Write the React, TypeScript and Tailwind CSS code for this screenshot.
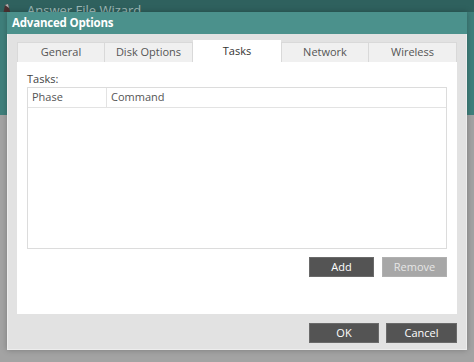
import React from "react";

const tabs = ["General", "Disk Options", "Tasks", "Network", "Wireless"];

function Tab({ label, active }: { label: string; active: boolean }) {
  if (active) {
    return (
      <div className="-mt-[2px] flex h-[22px] w-[88px] items-center justify-center bg-white text-[11px] text-[#333]">
        {label}
      </div>
    );
  }
  return (
    <div className="flex h-[20px] w-[88px] items-center justify-center border border-b-0 border-[#d9d9d9] bg-[#f0f0f0] text-[11px] text-[#555] [&+&]:border-l-0">
      {label}
    </div>
  );
}

function DarkButton({ children, muted }: { children: React.ReactNode; muted?: boolean }) {
  return (
    <button
      className={
        muted
          ? "flex h-[20px] w-[65px] items-center justify-center border border-[#b0b0b0] bg-[#a7a7a7] text-[11px] text-[#e6e6e6]"
          : "flex h-[20px] w-[65px] items-center justify-center border border-[#6a6a6a] bg-[#545454] text-[11px] text-white"
      }
    >
      {children}
    </button>
  );
}

export default function App() {
  return (
    <div
      className="relative h-[362px] w-[474px] overflow-hidden bg-[#a3a3a3]"
      style={{ fontFamily: '"Segoe UI", "Open Sans", "Noto Sans", sans-serif' }}
    >
      {/* wizard window behind */}
      <div className="flex h-[12px] items-start overflow-hidden bg-[#2f615e]">
        <svg width="10" height="12" viewBox="0 0 10 12" className="ml-[2px] mt-[3px]">
          <path d="M1 12 L3 2 L6 1 L9 12 Z" fill="#4a3030" />
          <path d="M3 2 L6 1 L7 5 Z" fill="#b0b0b0" />
        </svg>
        <span className="ml-[15px] mt-[1px] text-[13px] leading-[18px] text-[#9fb9b7]">Answer File Wizard</span>
      </div>
      <div className="h-[103px] bg-[#3f7f7b]" />

      {/* dialog */}
      <div className="absolute left-[7px] top-[12px] flex h-[338px] w-[460px] flex-col bg-[#e2e2e2] shadow-[0_0_6px_rgba(0,0,0,0.25)]">
        <div className="flex h-[22px] items-center bg-[#4b918c] pl-[5px] text-[11.5px] font-bold tracking-[-0.2px] text-white">
          Advanced Options
        </div>
        <div className="flex flex-1 flex-col border border-t-0 border-[#ededed] px-[9px] pt-[8px]">
          <div className="flex h-[20px] items-end">
            {tabs.map((t) => (
              <Tab key={t} label={t} active={t === "Tasks"} />
            ))}
          </div>
          <div className="flex h-[252px] flex-col bg-white px-[10px]">
            <div className="mt-[9px] text-[11px] leading-[15px] text-[#444]">Tasks:</div>
            <div className="mt-[1px] flex h-[162px] flex-col border border-[#dcdcdc]">
              <div className="flex h-[20px] border-b border-[#e3e3e3] text-[11px] text-[#555]">
                <div className="flex w-[79px] items-center border-r border-[#e3e3e3] pl-[4px]">Phase</div>
                <div className="flex items-center pl-[4px]">Command</div>
              </div>
            </div>
            <div className="mt-[8px] flex justify-end gap-[8px]">
              <DarkButton>Add</DarkButton>
              <DarkButton muted>Remove</DarkButton>
            </div>
          </div>
          <div className="mt-[9px] flex justify-end gap-[7px]">
            <button className="flex h-[20px] w-[70px] items-center justify-center border border-[#6a6a6a] bg-[#545454] text-[11px] text-white">
              OK
            </button>
            <button className="flex h-[20px] w-[71px] items-center justify-center border border-[#6a6a6a] bg-[#545454] text-[11px] text-white">
              Cancel
            </button>
          </div>
        </div>
      </div>
    </div>
  );
}
